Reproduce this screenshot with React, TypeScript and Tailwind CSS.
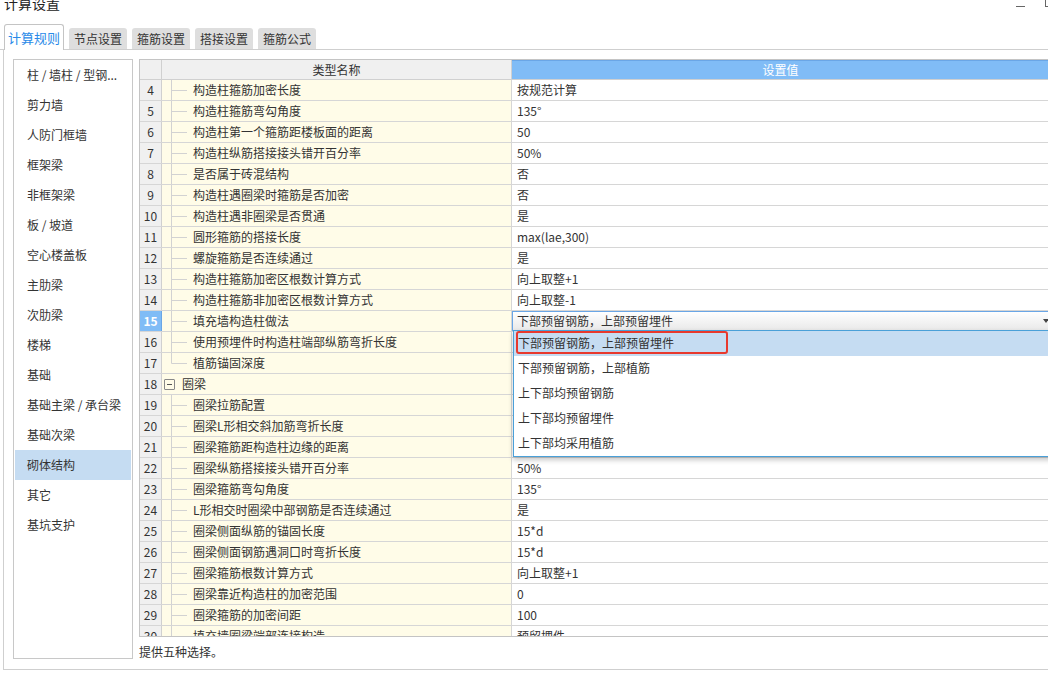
import { FC } from 'react';

type Row = { n: number; name: string; value: string; kind: 'child' | 'last' | 'parent' };

// rows 16-21 sit under the open dropdown, so their values are left blank
const rows: Row[] = [
  { n: 4, name: '构造柱箍筋加密长度', value: '按规范计算', kind: 'child' },
  { n: 5, name: '构造柱箍筋弯勾角度', value: '135°', kind: 'child' },
  { n: 6, name: '构造柱第一个箍筋距楼板面的距离', value: '50', kind: 'child' },
  { n: 7, name: '构造柱纵筋搭接接头错开百分率', value: '50%', kind: 'child' },
  { n: 8, name: '是否属于砖混结构', value: '否', kind: 'child' },
  { n: 9, name: '构造柱遇圈梁时箍筋是否加密', value: '否', kind: 'child' },
  { n: 10, name: '构造柱遇非圈梁是否贯通', value: '是', kind: 'child' },
  { n: 11, name: '圆形箍筋的搭接长度', value: 'max(lae,300)', kind: 'child' },
  { n: 12, name: '螺旋箍筋是否连续通过', value: '是', kind: 'child' },
  { n: 13, name: '构造柱箍筋加密区根数计算方式', value: '向上取整+1', kind: 'child' },
  { n: 14, name: '构造柱箍筋非加密区根数计算方式', value: '向上取整-1', kind: 'child' },
  { n: 15, name: '填充墙构造柱做法', value: '下部预留钢筋，上部预留埋件', kind: 'child' },
  { n: 16, name: '使用预埋件时构造柱端部纵筋弯折长度', value: '', kind: 'child' },
  { n: 17, name: '植筋锚固深度', value: '', kind: 'last' },
  { n: 18, name: '圈梁', value: '', kind: 'parent' },
  { n: 19, name: '圈梁拉筋配置', value: '', kind: 'child' },
  { n: 20, name: '圈梁L形相交斜加筋弯折长度', value: '', kind: 'child' },
  { n: 21, name: '圈梁箍筋距构造柱边缘的距离', value: '', kind: 'child' },
  { n: 22, name: '圈梁纵筋搭接接头错开百分率', value: '50%', kind: 'child' },
  { n: 23, name: '圈梁箍筋弯勾角度', value: '135°', kind: 'child' },
  { n: 24, name: 'L形相交时圈梁中部钢筋是否连续通过', value: '是', kind: 'child' },
  { n: 25, name: '圈梁侧面纵筋的锚固长度', value: '15*d', kind: 'child' },
  { n: 26, name: '圈梁侧面钢筋遇洞口时弯折长度', value: '15*d', kind: 'child' },
  { n: 27, name: '圈梁箍筋根数计算方式', value: '向上取整+1', kind: 'child' },
  { n: 28, name: '圈梁靠近构造柱的加密范围', value: '0', kind: 'child' },
  { n: 29, name: '圈梁箍筋的加密间距', value: '100', kind: 'child' },
  { n: 30, name: '填充墙圈梁端部连接构造', value: '预留埋件', kind: 'child' },
];

const menu = [
  '柱 / 墙柱 / 型钢...',
  '剪力墙',
  '人防门框墙',
  '框架梁',
  '非框架梁',
  '板 / 坡道',
  '空心楼盖板',
  '主肋梁',
  '次肋梁',
  '楼梯',
  '基础',
  '基础主梁 / 承台梁',
  '基础次梁',
  '砌体结构',
  '其它',
  '基坑支护',
];

const options = [
  '下部预留钢筋，上部预留埋件',
  '下部预留钢筋，上部植筋',
  '上下部均预留钢筋',
  '上下部均预留埋件',
  '上下部均采用植筋',
];

const tabs = ['节点设置', '箍筋设置', '搭接设置', '箍筋公式'];

const TreeLine: FC<{ last?: boolean }> = ({ last }) => (
  <svg width="31" height="20" className="shrink-0">
    <line x1="9.5" y1="0" x2="9.5" y2={last ? 10.5 : 20} stroke="#d2d2d2" />
    <line x1="9.5" y1="10.5" x2="25" y2="10.5" stroke="#d2d2d2" />
  </svg>
);

const App: FC = () => {
  return (
    <div className="w-[1048px] h-[675px] bg-white overflow-hidden text-[12px] text-[#333] font-['Noto_Sans_CJK_SC','Noto_Sans',sans-serif]">
      {/* title bar */}
      <div className="h-[24px] flex justify-between overflow-hidden">
        <div className="-mt-[4px] ml-[4px] text-[14px] leading-[14px] text-[#222]">计算设置</div>
        <div className="flex items-start gap-[20px]">
          <div className="w-[9px] h-px bg-[#666] mt-[6px]"></div>
          <div className="w-[9px] h-[8px] border border-[#666] -mt-[1px] -mr-[6px]"></div>
        </div>
      </div>

      {/* tabs */}
      <div className="h-[26px] flex items-end pl-[4px] gap-[5px] border-b border-[#cfcfcf]">
        <div className="relative z-10 -mb-px h-[26px] w-[60px] bg-white border border-b-0 border-[#c4c4c4] rounded-t-[3px] flex items-center justify-center text-[13px] text-[#2a8ae8]">
          计算规则
        </div>
        {tabs.map((t) => (
          <div key={t} className="h-[21px] w-[58px] bg-[#dedede] rounded-t-[3px] flex items-center justify-center text-[#333]">
            {t}
          </div>
        ))}
      </div>

      {/* panel */}
      <div className="ml-[3px] w-[1050px] h-[620px] border-l border-b border-[#cfcfcf] pt-[9px] pl-[9px] flex">
        <div className="w-[120px] h-[600px] border border-[#c8c8c8] shrink-0">
          {menu.map((m) => (
            <div
              key={m}
              className={`h-[30px] mx-px flex items-center pl-[12px] whitespace-nowrap ${m === '砌体结构' ? 'bg-[#c5dcf2]' : ''}`}
            >
              {m}
            </div>
          ))}
        </div>

        <div className="ml-[6px] flex-1 flex flex-col">
          <div className="relative h-[578px] border border-r-0 border-[#c4c4c4] overflow-hidden">
            {/* header */}
            <div className="h-[20px] flex border-b border-[#d0d0d0]">
              <div className="w-[22px] shrink-0 bg-[#f0f0f0] border-r border-[#d0d0d0]"></div>
              <div className="w-[350px] shrink-0 bg-[#f0f0f0] border-r border-[#d0d0d0] flex items-center justify-center">
                类型名称
              </div>
              <div className="flex-1 bg-[#80bcf6] border-t border-[#6aa6e6] flex items-center justify-center pr-[4px] text-white">
                设置值
              </div>
            </div>

            {rows.map((r) => {
              const sel = r.n === 15;
              return (
                <div key={r.n} className="h-[21px] flex border-b border-[#d6d6d6]">
                  <div
                    className={`w-[22px] shrink-0 border-r flex items-center justify-center ${
                      sel ? 'bg-[#80bcf6] border-[#6aa6e6] text-white font-bold' : 'bg-[#f0f0f0] border-[#d0d0d0]'
                    }`}
                  >
                    {r.n}
                  </div>
                  <div className="w-[350px] shrink-0 bg-[#fffce8] border-r border-[#d6d6d6] flex items-center whitespace-nowrap">
                    {r.kind === 'parent' ? (
                      <>
                        <div className="ml-[2px] w-[11px] h-[11px] border border-[#888] rounded-[1px] flex items-center justify-center">
                          <div className="w-[5px] h-px bg-[#555]"></div>
                        </div>
                        <span className="ml-[7px]">{r.name}</span>
                      </>
                    ) : (
                      <>
                        <TreeLine last={r.kind === 'last'} />
                        <span>{r.name}</span>
                      </>
                    )}
                  </div>
                  {sel ? (
                    <div className="flex-1 border border-[#6aa6e6] bg-gradient-to-b from-white to-[#e9e9e9] flex items-center justify-between pl-[4px] pr-[3px]">
                      <span>{r.value}</span>
                      <svg width="6" height="4" viewBox="0 0 6 4">
                        <path d="M0 0h6L3 4z" fill="#444" />
                      </svg>
                    </div>
                  ) : (
                    <div className="flex-1 bg-white flex items-center pl-[5px] whitespace-nowrap">{r.value}</div>
                  )}
                </div>
              );
            })}

            {/* dropdown list */}
            <div className="absolute left-[373px] top-[270px] w-[700px] bg-white border border-[#4aa0d8] shadow-[0_3px_5px_rgba(0,0,0,0.22)]">
              {options.map((o, i) => (
                <div
                  key={o}
                  className={`relative h-[25px] flex items-center pl-[4px] pb-[2px] ${i === 0 ? 'bg-[#c5dcf2]' : ''}`}
                >
                  {i === 0 && (
                    <div className="absolute left-[2px] top-0 w-[212px] h-[23px] border-2 border-[#e8392e] rounded-[3px]"></div>
                  )}
                  <span>{o}</span>
                </div>
              ))}
            </div>
          </div>
          <div className="mt-[7px] leading-[16px]">提供五种选择。</div>
        </div>
      </div>
    </div>
  );
};

export default App;
